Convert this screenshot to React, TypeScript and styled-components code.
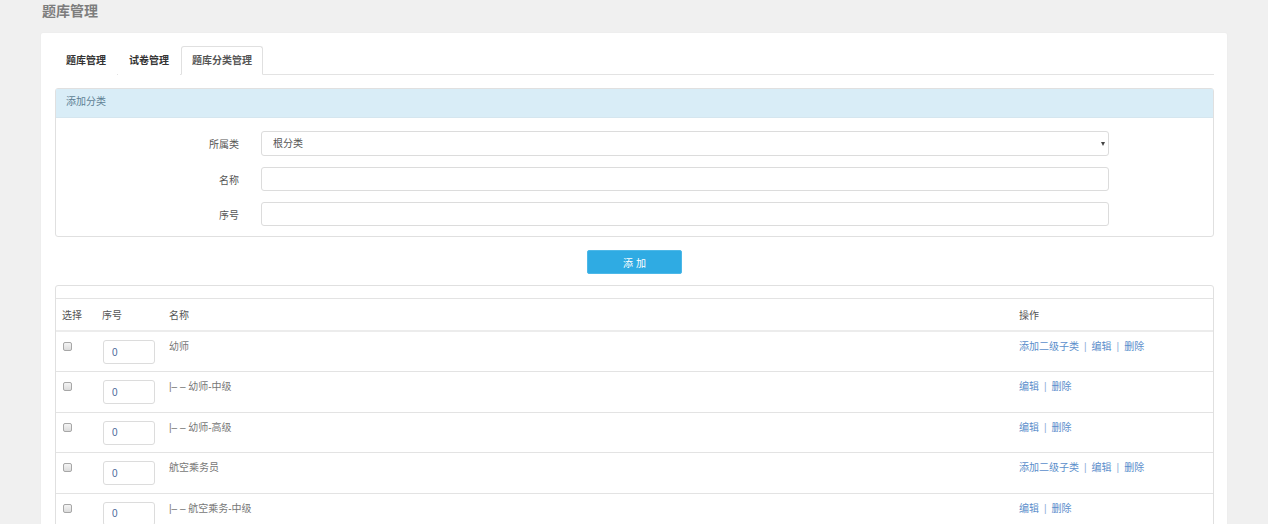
import React from "react";
import styled, { createGlobalStyle } from "styled-components";

const Global = createGlobalStyle`
  html, body { margin: 0; padding: 0; background: #f0f0f0; }
  body { font-family: "Liberation Sans", "Noto Sans CJK SC", sans-serif; font-size: 10px; color: #777; }
  * { box-sizing: border-box; }
`;

const Page = styled.div`
  width: 1268px;
  min-height: 524px;
  padding: 0 41px 0 41px;
`;

const PageTitle = styled.h1`
  margin: 0;
  height: 33px;
  padding: 2px 0 0 1px;
  font-size: 14px;
  line-height: 18px;
  font-weight: bold;
  color: #7d7d7d;
`;

const Card = styled.div`
  background: #fff;
  padding: 13px 13px 20px 14px;
  border-radius: 2px;
  box-shadow: 0 0 2px rgba(0, 0, 0, 0.04);
`;

const Tabs = styled.div`
  display: flex;
  height: 29px;
  border-bottom: 1px solid #e3e3e3;
`;

const Tab = styled.div<{ $active?: boolean }>`
  height: 29px;
  padding: 0 10px;
  margin-right: 1px;
  line-height: 28px;
  font-size: 10px;
  font-weight: bold;
  color: ${(p) => (p.$active ? "#555" : "#333")};
  background: #fff;
  border: 1px solid ${(p) => (p.$active ? "#e0e0e0" : "transparent")};
  border-bottom-color: ${(p) => (p.$active ? "#fff" : "transparent")};
  border-radius: 3px 3px 0 0;
  margin-bottom: -1px;
`;

const Panel = styled.div<{ $mt: number }>`
  margin-top: ${(p) => p.$mt}px;
  border: 1px solid #e0e0e0;
  border-radius: 3px;
  background: #fff;
`;

const PanelHeading = styled.div`
  height: 29px;
  background: #d9edf7;
  padding-left: 10px;
  line-height: 26px;
  font-size: 10px;
  color: #5d7f94;
  border-bottom: 1px solid #d5e6ef;
`;

const FormBody = styled.div`
  padding: 13px 0 10px 0;
  display: flex;
  flex-direction: column;
  gap: 11px;
`;

const FormRow = styled.div`
  display: grid;
  grid-template-columns: 183px 848px;
  column-gap: 22px;
  align-items: center;
`;

const Label = styled.label`
  text-align: right;
  font-size: 10px;
  color: #555;
`;

const TextInput = styled.input`
  height: 24px;
  width: 100%;
  border: 1px solid #dcdcdc;
  border-radius: 3px;
  padding: 0 11px;
  font: inherit;
  font-size: 10px;
  color: #555;
  outline: none;
`;

const SelectWrap = styled.div`
  position: relative;
  height: 25px;
`;

const Select = styled.select`
  appearance: none;
  -webkit-appearance: none;
  height: 25px;
  width: 100%;
  border: 1px solid #dcdcdc;
  border-radius: 3px;
  padding: 0 11px;
  background: #fff;
  font: inherit;
  font-size: 10px;
  color: #555;
  outline: none;
`;

const Caret = styled.span`
  position: absolute;
  right: 4px;
  top: 11px;
  width: 0;
  height: 0;
  border-left: 2.5px solid transparent;
  border-right: 2.5px solid transparent;
  border-top: 4px solid #444;
  pointer-events: none;
`;

const ButtonRow = styled.div`
  display: flex;
  justify-content: center;
  margin-top: 13px;
`;

const PrimaryButton = styled.button`
  width: 95px;
  height: 24px;
  border: 1px solid #4db8e8;
  border-radius: 2px;
  background: #2fabe3;
  color: #fff;
  font: inherit;
  font-size: 10px;
  letter-spacing: 3px;
  padding: 0 0 0 3px;
`;

const Table = styled.table`
  width: 100%;
  border-collapse: collapse;
  font-size: 10px;
`;

const Spacer = styled.div`
  height: 13px;
  border-bottom: 1px solid #e3e3e3;
`;

const Th = styled.th<{ $w?: number; $pl: number }>`
  text-align: left;
  font-weight: normal;
  color: #555;
  height: 32px;
  padding: 0 0 0 ${(p) => p.$pl}px;
  width: ${(p) => (p.$w ? `${p.$w}px` : "auto")};
  border-bottom: 2px solid #ececec;
`;

const Tr = styled.tr`
  & + & td { border-top: 1px solid #e3e3e3; }
`;

const Td = styled.td<{ $pl: number }>`
  vertical-align: top;
  height: 40.6px;
  padding: 8px 0 0 ${(p) => p.$pl}px;
  color: #777;
`;

const Check = styled.input.attrs({ type: "checkbox" })`
  appearance: none;
  -webkit-appearance: none;
  display: block;
  width: 9px;
  height: 9px;
  margin: 2px 0 0 0;
  border: 1px solid #a7a7a7;
  border-radius: 2px;
  background: linear-gradient(#f4f4f4, #dcdcdc);
`;

const SortInput = styled.input`
  display: block;
  width: 52px;
  height: 24px;
  border: 1px solid #dcdcdc;
  border-radius: 3px;
  padding: 0 0 0 8px;
  margin-left: 1px;
  font: inherit;
  font-size: 10px;
  color: #4a6a9a;
  outline: none;
`;

const NameText = styled.span`
  display: block;
  line-height: 14px;
`;

const Ops = styled.span`
  display: flex;
  align-items: center;
  line-height: 14px;
`;

const OpLink = styled.a`
  color: #5b8ecb;
  text-decoration: none;
`;

const Sep = styled.span`
  color: #8fb1d8;
  margin: 0 5px;
`;

type Row = { name: string; top: boolean };

const rows: Row[] = [
  { name: "幼师", top: true },
  { name: "|– – 幼师-中级", top: false },
  { name: "|– – 幼师-高级", top: false },
  { name: "航空乘务员", top: true },
  { name: "|– – 航空乘务-中级", top: false },
];

export default function App() {
  return (
    <>
      <Global />
      <Page>
        <PageTitle>题库管理</PageTitle>
        <Card>
          <Tabs>
            <Tab>题库管理</Tab>
            <Tab>试卷管理</Tab>
            <Tab $active>题库分类管理</Tab>
          </Tabs>

          <Panel $mt={13}>
            <PanelHeading>添加分类</PanelHeading>
            <FormBody>
              <FormRow>
                <Label>所属类</Label>
                <SelectWrap>
                  <Select defaultValue="root">
                    <option value="root">根分类</option>
                  </Select>
                  <Caret />
                </SelectWrap>
              </FormRow>
              <FormRow>
                <Label>名称</Label>
                <TextInput />
              </FormRow>
              <FormRow>
                <Label>序号</Label>
                <TextInput />
              </FormRow>
            </FormBody>
          </Panel>

          <ButtonRow>
            <PrimaryButton>添加</PrimaryButton>
          </ButtonRow>

          <Panel $mt={11}>
            <Spacer />
            <Table>
              <thead>
                <tr>
                  <Th $w={46} $pl={6}>选择</Th>
                  <Th $w={67} $pl={0}>序号</Th>
                  <Th $pl={0}>名称</Th>
                  <Th $w={194} $pl={0}>操作</Th>
                </tr>
              </thead>
              <tbody>
                {rows.map((r, i) => (
                  <Tr key={i}>
                    <Td $pl={7}>
                      <Check />
                    </Td>
                    <Td $pl={0}>
                      <SortInput defaultValue="0" />
                    </Td>
                    <Td $pl={0}>
                      <NameText>{r.name}</NameText>
                    </Td>
                    <Td $pl={0}>
                      <Ops>
                        {r.top && (
                          <>
                            <OpLink>添加二级子类</OpLink>
                            <Sep>|</Sep>
                          </>
                        )}
                        <OpLink>编辑</OpLink>
                        <Sep>|</Sep>
                        <OpLink>删除</OpLink>
                      </Ops>
                    </Td>
                  </Tr>
                ))}
              </tbody>
            </Table>
          </Panel>
        </Card>
      </Page>
    </>
  );
}
